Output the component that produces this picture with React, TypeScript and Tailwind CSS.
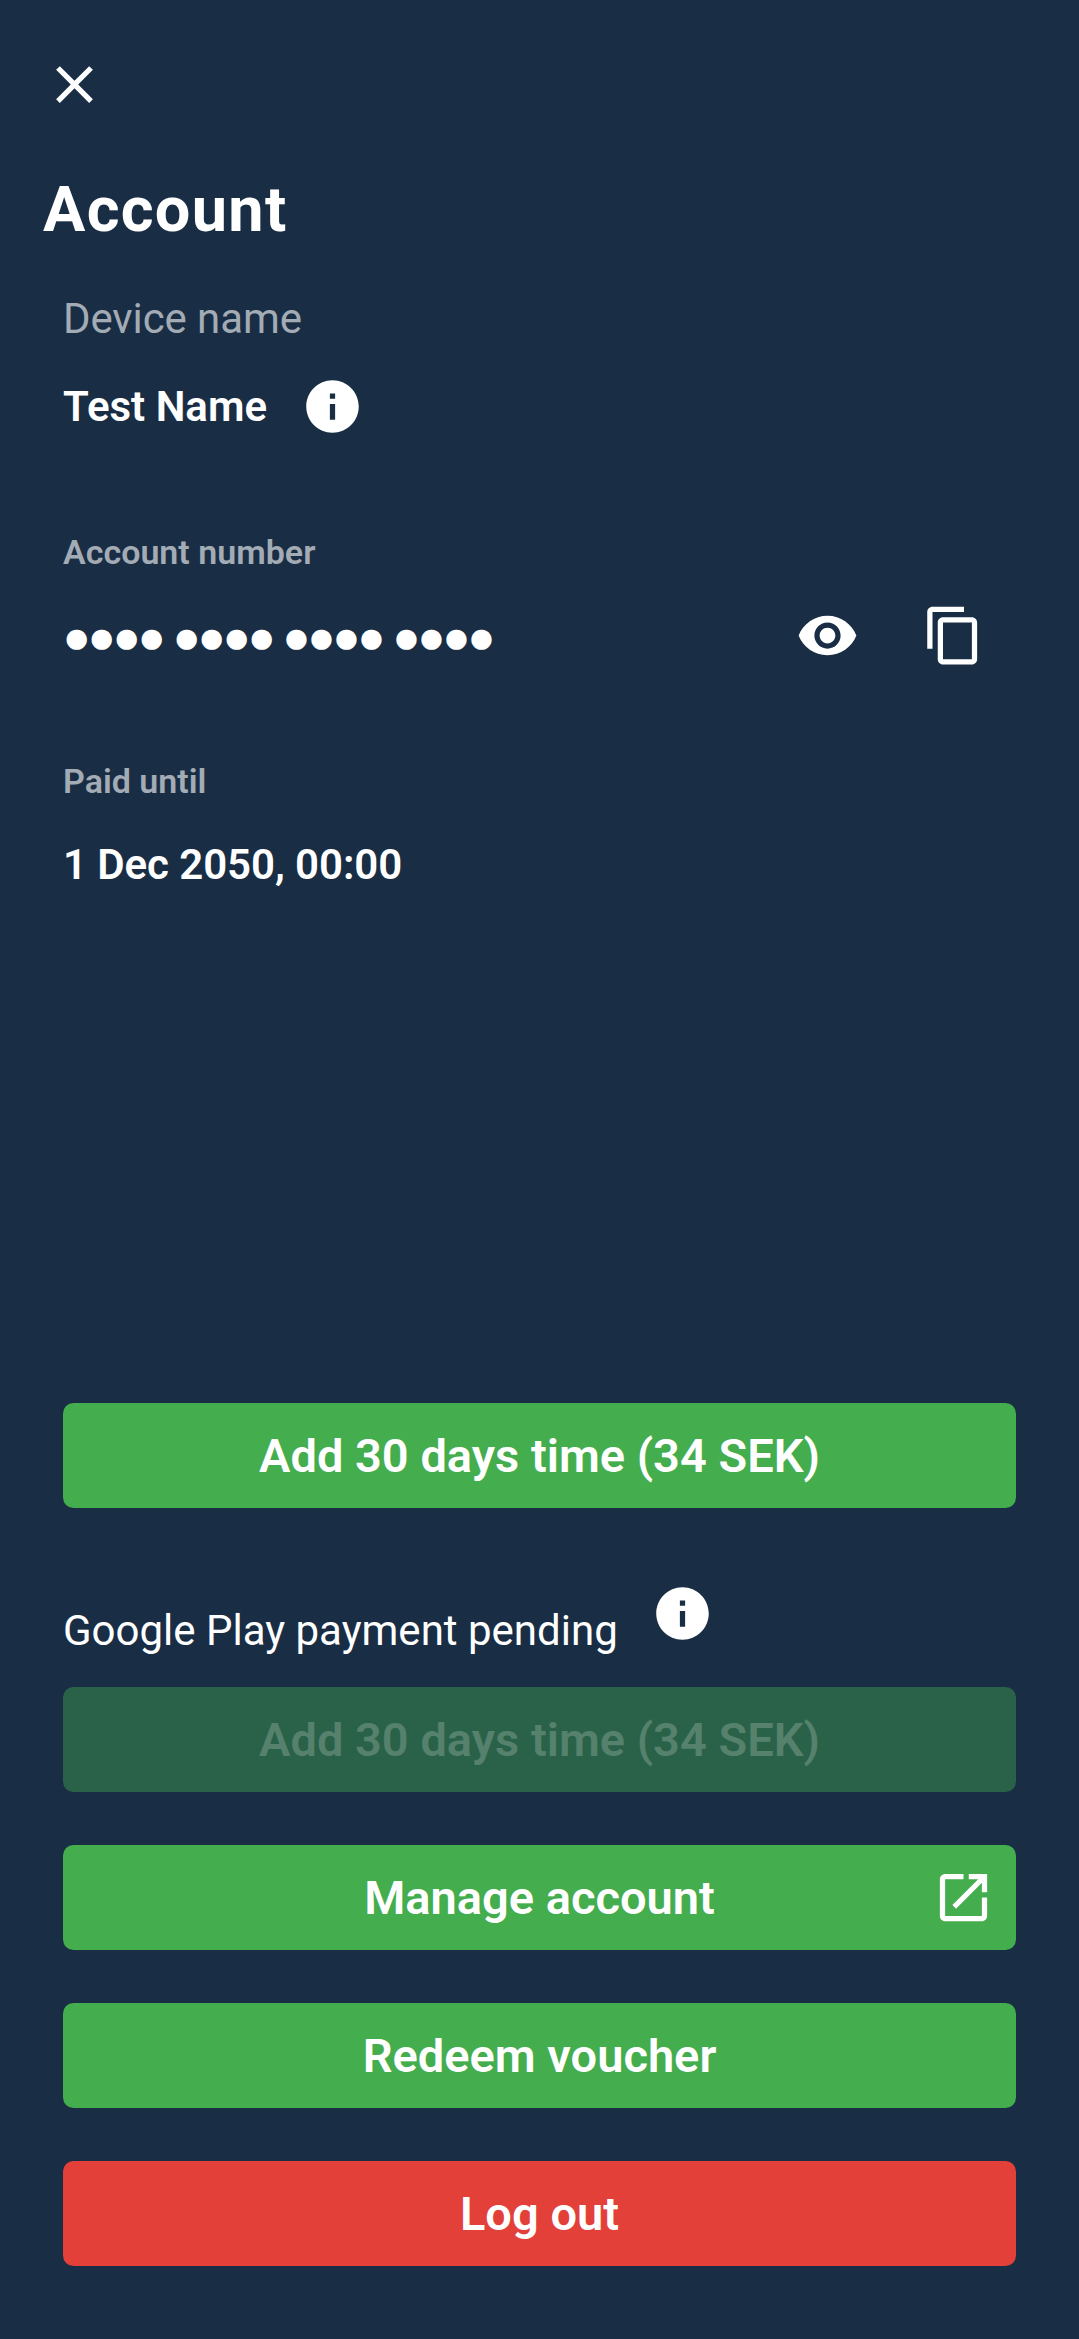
import React from "react";

const ICON = {
  close: "M19 6.41 17.59 5 12 10.59 6.41 5 5 6.41 10.59 12 5 17.59 6.41 19 12 13.41 17.59 19 19 17.59 13.41 12z",
  info: "M12 2C6.48 2 2 6.48 2 12s4.48 10 10 10 10-4.48 10-10S17.52 2 12 2zm1 15h-2v-6h2v6zm0-8h-2V7h2v2z",
  eye: "M12 4.5C7 4.5 2.73 7.61 1 12c1.73 4.39 6 7.5 11 7.5s9.27-3.11 11-7.5c-1.73-4.39-6-7.5-11-7.5zM12 17c-2.76 0-5-2.24-5-5s2.24-5 5-5 5 2.24 5 5-2.24 5-5 5zm0-8c-1.66 0-3 1.34-3 3s1.34 3 3 3 3-1.34 3-3-1.34-3-3-3z",
  copy: "M16 1H4c-1.1 0-2 .9-2 2v14h2V3h12V1zm3 4H8c-1.1 0-2 .9-2 2v14c0 1.1.9 2 2 2h11c1.1 0 2-.9 2-2V7c0-1.1-.9-2-2-2zm0 16H8V7h11v14z",
  open: "M19 19H5V5h7V3H5c-1.11 0-2 .9-2 2v14c0 1.1.89 2 2 2h14c1.1 0 2-.9 2-2v-7h-2v7zM14 3v2h3.59l-9.83 9.83 1.41 1.41L19 6.41V10h2V3h-7z",
};

function Icon({ name, className = "" }: { name: keyof typeof ICON; className?: string }) {
  return (
    <svg viewBox="0 0 24 24" fill="currentColor" className={`size-[63px] shrink-0 ${className}`} aria-hidden="true">
      <path d={ICON[name]} />
    </svg>
  );
}

function Button({ children, className }: { children: React.ReactNode; className: string }) {
  return (
    <button
      className={`relative flex h-[105px] w-full shrink-0 items-center justify-center rounded-[10.5px] pt-[2px] text-[47px] font-semibold ${className}`}
    >
      {children}
    </button>
  );
}

export default function App() {
  return (
    <main className="flex h-[2339px] w-[1079px] flex-col overflow-hidden bg-[#192e45] font-['Roboto',sans-serif] text-white">
      <button aria-label="Close" className="ml-[43px] mt-[53px] size-[63px] shrink-0">
        <Icon name="close" />
      </button>
      <h1 className="ml-[43px] mt-[54px] h-[80px] text-[63px] font-bold leading-[80px] tracking-[1.3px]">Account</h1>

      <section className="mx-[63px] mt-[43px]">
        <p className="h-[52px] text-[42px] leading-[52px] tracking-[-0.1px] text-[#a3abb5]">Device name</p>
        <div className="mt-[30px] flex h-[63px] items-center gap-[34px]">
          <p className="text-[42px] font-semibold leading-[49px]">Test Name</p>
          <Icon name="info" />
        </div>
      </section>

      <section className="mx-[63px] mt-[94px]">
        <p className="h-[40px] text-[34px] font-semibold leading-[40px] text-[#a3abb5]">Account number</p>
        <div className="mt-[32px] flex h-[63px] items-center">
          <p className="-ml-[0.5px] grow pt-px text-[47px] font-semibold leading-[63px] tracking-[-3.4px] [word-spacing:1.7px]">
            ●●●● ●●●● ●●●● ●●●●
          </p>
          <Icon name="eye" className="mr-[63px]" />
          <Icon name="copy" className="mr-[31px]" />
        </div>
      </section>

      <section className="mx-[63px] mt-[94px]">
        <p className="h-[40px] text-[34px] font-semibold leading-[40px] text-[#a3abb5]">Paid until</p>
        <p className="mt-[38px] h-[52px] text-[42px] font-semibold leading-[52px] tracking-[-0.08px]">1 Dec 2050, 00:00</p>
      </section>

      <section className="mx-[63px] mb-[73px] mt-auto flex flex-col">
        <Button className="bg-[#44ad4d]">Add 30 days time (34 SEK)</Button>
        <div className="mt-[74px] flex h-[84px] items-start gap-[33px]">
          <p className="mt-[23px] text-[42px] leading-[52px]">Google Play payment pending</p>
          <Icon name="info" />
        </div>
        <Button className="mt-[21px] bg-[#2a6249] text-[#55816d]">Add 30 days time (34 SEK)</Button>
        <Button className="mt-[53px] bg-[#44ad4d]">
          Manage account
          <Icon name="open" className="absolute right-[21px] top-[21px]" />
        </Button>
        <Button className="mt-[53px] bg-[#44ad4d]">Redeem voucher</Button>
        <Button className="mt-[53px] bg-[#e34039]">Log out</Button>
      </section>
    </main>
  );
}
